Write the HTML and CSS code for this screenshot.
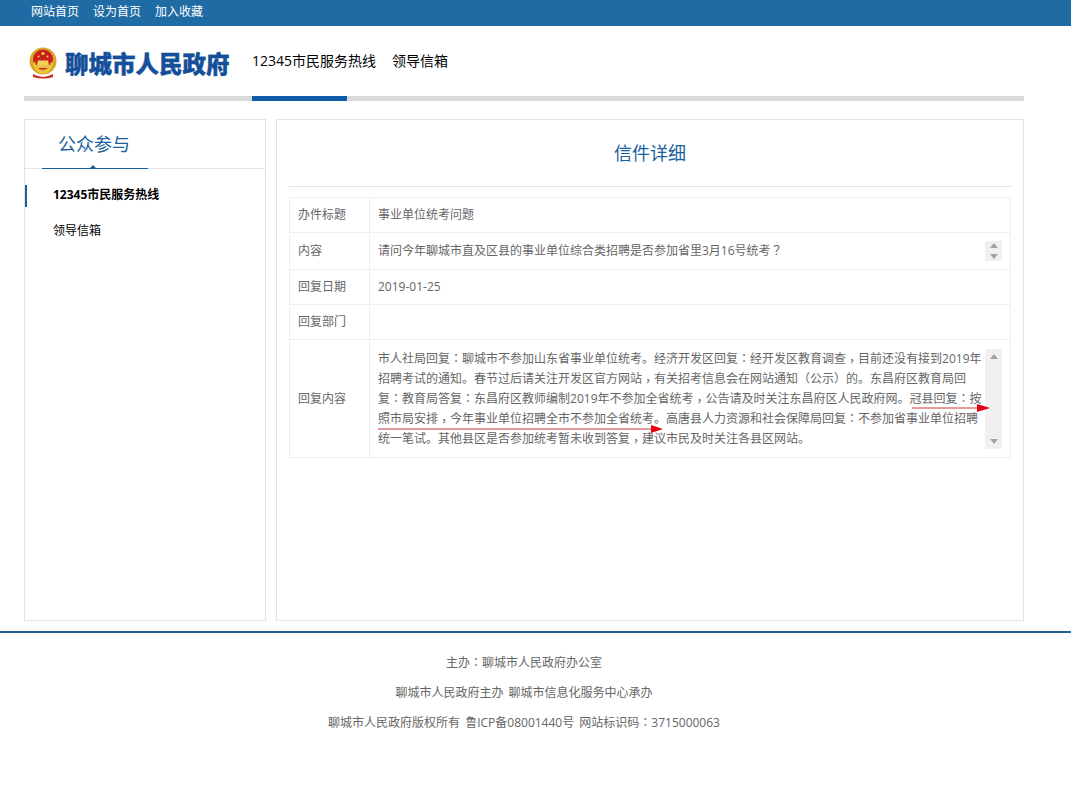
FILE: index.html
```html
<!DOCTYPE html>
<html lang="zh-CN">
<head>
<meta charset="utf-8">
<title>信件详细</title>
<link rel="stylesheet" href="styles.css">
</head>
<body>
<div class="topbar">
  <div class="wrap topbar-links"><a>网站首页</a><a>设为首页</a><a>加入收藏</a></div>
</div>
<div class="wrap">
  <header class="header">
    <div class="logo">
      <svg class="emblem" width="28" height="33" viewBox="0 0 28 33">
        <circle cx="14" cy="14" r="13.5" fill="#d9a62c"/>
        <circle cx="14" cy="12.5" r="10" fill="#c9201e"/>
        <path d="M4 16 Q6 26 14 27 Q22 26 24 16 L22 15 Q20 23 14 24 Q8 23 6 15 Z" fill="#f0c53c"/>
        <circle cx="14" cy="6.5" r="1.5" fill="#f6d548"/>
        <circle cx="9.5" cy="9.5" r="1" fill="#f6d548"/>
        <circle cx="18.5" cy="9.5" r="1" fill="#f6d548"/>
        <path d="M8 18 L9 13.5 H19 L20 18 Z" fill="#f4d25a"/>
        <rect x="7" y="18" width="14" height="3" fill="#e8c048"/>
        <path d="M4 27 Q14 33 24 27 L24 30 Q14 33 4 30 Z" fill="#d0261f"/>
      </svg>
      <span class="logo-text">聊城市人民政府</span>
    </div>
    <nav class="nav"><a>12345市民服务热线</a><a>领导信箱</a></nav>
  </header>
  <div class="rule"><span class="rule-active"></span></div>
  <main class="columns">
    <aside class="side">
      <div class="side-head"><h2>公众参与</h2></div>
      <ul class="side-menu">
        <li class="current">12345市民服务热线</li>
        <li>领导信箱</li>
      </ul>
    </aside>
    <section class="content">
      <h1>信件详细</h1>
      <table class="detail">
        <tr class="r1"><th>办件标题</th><td>事业单位统考问题</td></tr>
        <tr class="r2"><th>内容</th><td>
          <div class="scrollbox short">
            <div class="scrolltext">请问今年聊城市直及区县的事业单位综合类招聘是否参加省里3月16号统考<span class="pc" lang="zh-TW">？</span></div>
            <div class="bar"><i class="up"></i><i class="down"></i></div>
          </div>
        </td></tr>
        <tr class="r3"><th>回复日期</th><td>2019-01-25</td></tr>
        <tr class="r3"><th>回复部门</th><td></td></tr>
        <tr class="r5"><th>回复内容</th><td>
          <div class="scrollbox tall">
            <div class="scrolltext">市人社局回复<span class="pc" lang="zh-TW">：</span>聊城市不参加山东省事业单位统考。经济开发区回复<span class="pc" lang="zh-TW">：</span>经开发区教育调查<span class="pc low" lang="zh-TW">，</span>目前还没有接到2019年<br>招聘考试的通知。春节过后请关注开发区官方网站<span class="pc low" lang="zh-TW">，</span>有关招考信息会在网站通知<span class="pc" lang="zh-TW">（</span>公示<span class="pc" lang="zh-TW">）</span>的。东昌府区教育局回<br>复<span class="pc" lang="zh-TW">：</span>教育局答复<span class="pc" lang="zh-TW">：</span>东昌府区教师编制2019年不参加全省统考<span class="pc low" lang="zh-TW">，</span>公告请及时关注东昌府区人民政府网。冠县回复<span class="pc" lang="zh-TW">：</span>按<br>照市局安排<span class="pc low" lang="zh-TW">，</span>今年事业单位招聘全市不参加全省统考。高唐县人力资源和社会保障局回复<span class="pc" lang="zh-TW">：</span>不参加省事业单位招聘<br>统一笔试。其他县区是否参加统考暂未收到答复<span class="pc low" lang="zh-TW">，</span>建议市民及时关注各县区网站。</div>
            <div class="bar"><i class="up"></i><i class="down"></i></div>
            <svg class="arrow arrow-a" width="286" height="10" viewBox="0 0 286 10"><path d="M0 5H274" stroke="#c8383a" stroke-width="1"/><path d="M273 1 L285 5 L273 9 Z" fill="#e60012"/></svg>
            <svg class="arrow arrow-b" width="80" height="10" viewBox="0 0 80 10"><path d="M0 5H66" stroke="#c8383a" stroke-width="1"/><path d="M65 1 L78 5 L65 9 Z" fill="#e60012"/></svg>
          </div>
        </td></tr>
      </table>
    </section>
  </main>
</div>
<footer class="footer">
  <div class="wrap">
    <p>主办<span class="pc" lang="zh-TW">：</span>聊城市人民政府办公室</p>
    <p>聊城市人民政府主办 聊城市信息化服务中心承办</p>
    <p>聊城市人民政府版权所有 鲁ICP备08001440号 网站标识码<span class="pc" lang="zh-TW">：</span>3715000063</p>
  </div>
</footer>
</body>
</html>
```
FILE: styles.css
```css
* { box-sizing: border-box; }
html, body { margin: 0; padding: 0; background: #fff; }
body { font: 12px/20px "Open Sans", "Noto Sans CJK SC", sans-serif; color: #666; }
.wrap { width: 1000px; margin-left: 24px; }
.pc { font-family: "Noto Sans CJK TC", sans-serif; line-height: 0; }
.low { vertical-align: -3px; }

.topbar { height: 26px; background: #1f6ca5; }
.topbar-links { display: flex; gap: 14px; padding-left: 7px; line-height: 24px; color: #fff; }

.header { height: 70px; display: flex; align-items: center; }
.logo { width: 228px; display: flex; align-items: center; padding-left: 5px; }
.emblem { margin-top: 5px; margin-right: 8px; flex: none; }
.logo-text { font-size: 23.5px; font-weight: 900; line-height: 32px; color: #14509a; white-space: nowrap; margin-top: 5px; -webkit-text-stroke: 0.4px #14509a; }
.nav { display: flex; gap: 16px; font-size: 14px; line-height: 20px; color: #000; }

.rule { height: 5px; background: #d9d9d9; padding-left: 228px; }
.rule-active { display: block; width: 95px; height: 5px; background: #0f5ba7; }

.columns { display: flex; gap: 10px; margin-top: 18px; height: 502px; }
.side { width: 242px; border: 1px solid #e3e3e3; }
.side-head { height: 49px; border-bottom: 1px solid #e3e3e3; position: relative; padding-left: 33px; }
.side-head h2 { margin: 0; font-size: 18px; font-weight: 400; line-height: 48px; color: #1a5f9e; }
.side-head::after { content: ""; position: absolute; left: 17px; bottom: -1px; width: 106px; height: 1px; background: #1a5f9e; }
.side-head::before { content: ""; position: absolute; left: 65px; bottom: 0; border: 3px solid transparent; border-top: 0; border-bottom-color: #1a5f9e; }
.side-menu { list-style: none; margin: 16px 0 0; padding: 0; }
.side-menu li { height: 22px; line-height: 20px; padding-left: 28px; color: #000; margin-bottom: 14px; }
.side-menu .current { font-weight: 700; border-left: 2px solid #1a5f9e; margin-bottom: 14px; padding-left: 26px; }

.content { width: 748px; border: 1px solid #e3e3e3; padding: 0 12px; }
.content h1 { margin: 0 0 10px; height: 67px; border-bottom: 1px solid #e3e3e3; font-size: 18px; font-weight: 400; line-height: 66px; text-align: center; color: #1a5f9e; }
.detail { width: 722px; border-collapse: collapse; table-layout: fixed; }
.detail th, .detail td { border: 1px solid #eee; padding: 0 8px; font-weight: 400; text-align: left; color: #666; vertical-align: middle; }
.detail th { width: 80px; }
.r1 { height: 35px; }
.r2 { height: 37px; }
.r3 { height: 35px; }
.r5 { height: 118px; }

.scrollbox { display: flex; justify-content: space-between; position: relative; }
.scrollbox.short { align-items: center; }
.scrolltext { white-space: nowrap; }
.bar { width: 17px; flex: none; background: #f0f0f0; display: flex; flex-direction: column; align-items: center; justify-content: space-between; padding: 5px 0; margin-right: 0; }
.short .bar { height: 20px; padding: 2px 0; }
.tall .bar { height: 100px; }
.up, .down { display: block; width: 0; height: 0; border-left: 4px solid transparent; border-right: 4px solid transparent; }
.up { border-bottom: 5px solid #a3a3a3; }
.down { border-top: 5px solid #a3a3a3; }
.arrow { position: absolute; left: 0; }
.arrow-a { left: 0; top: 75px; }
.arrow-b { left: 534px; top: 54px; }

.footer { margin-top: 10px; border-top: 2px solid #1f5f8b; padding-top: 20px; height: 168px; }
.footer p { margin: 0 0 10px; text-align: center; color: #666; word-spacing: 2px; }
```
